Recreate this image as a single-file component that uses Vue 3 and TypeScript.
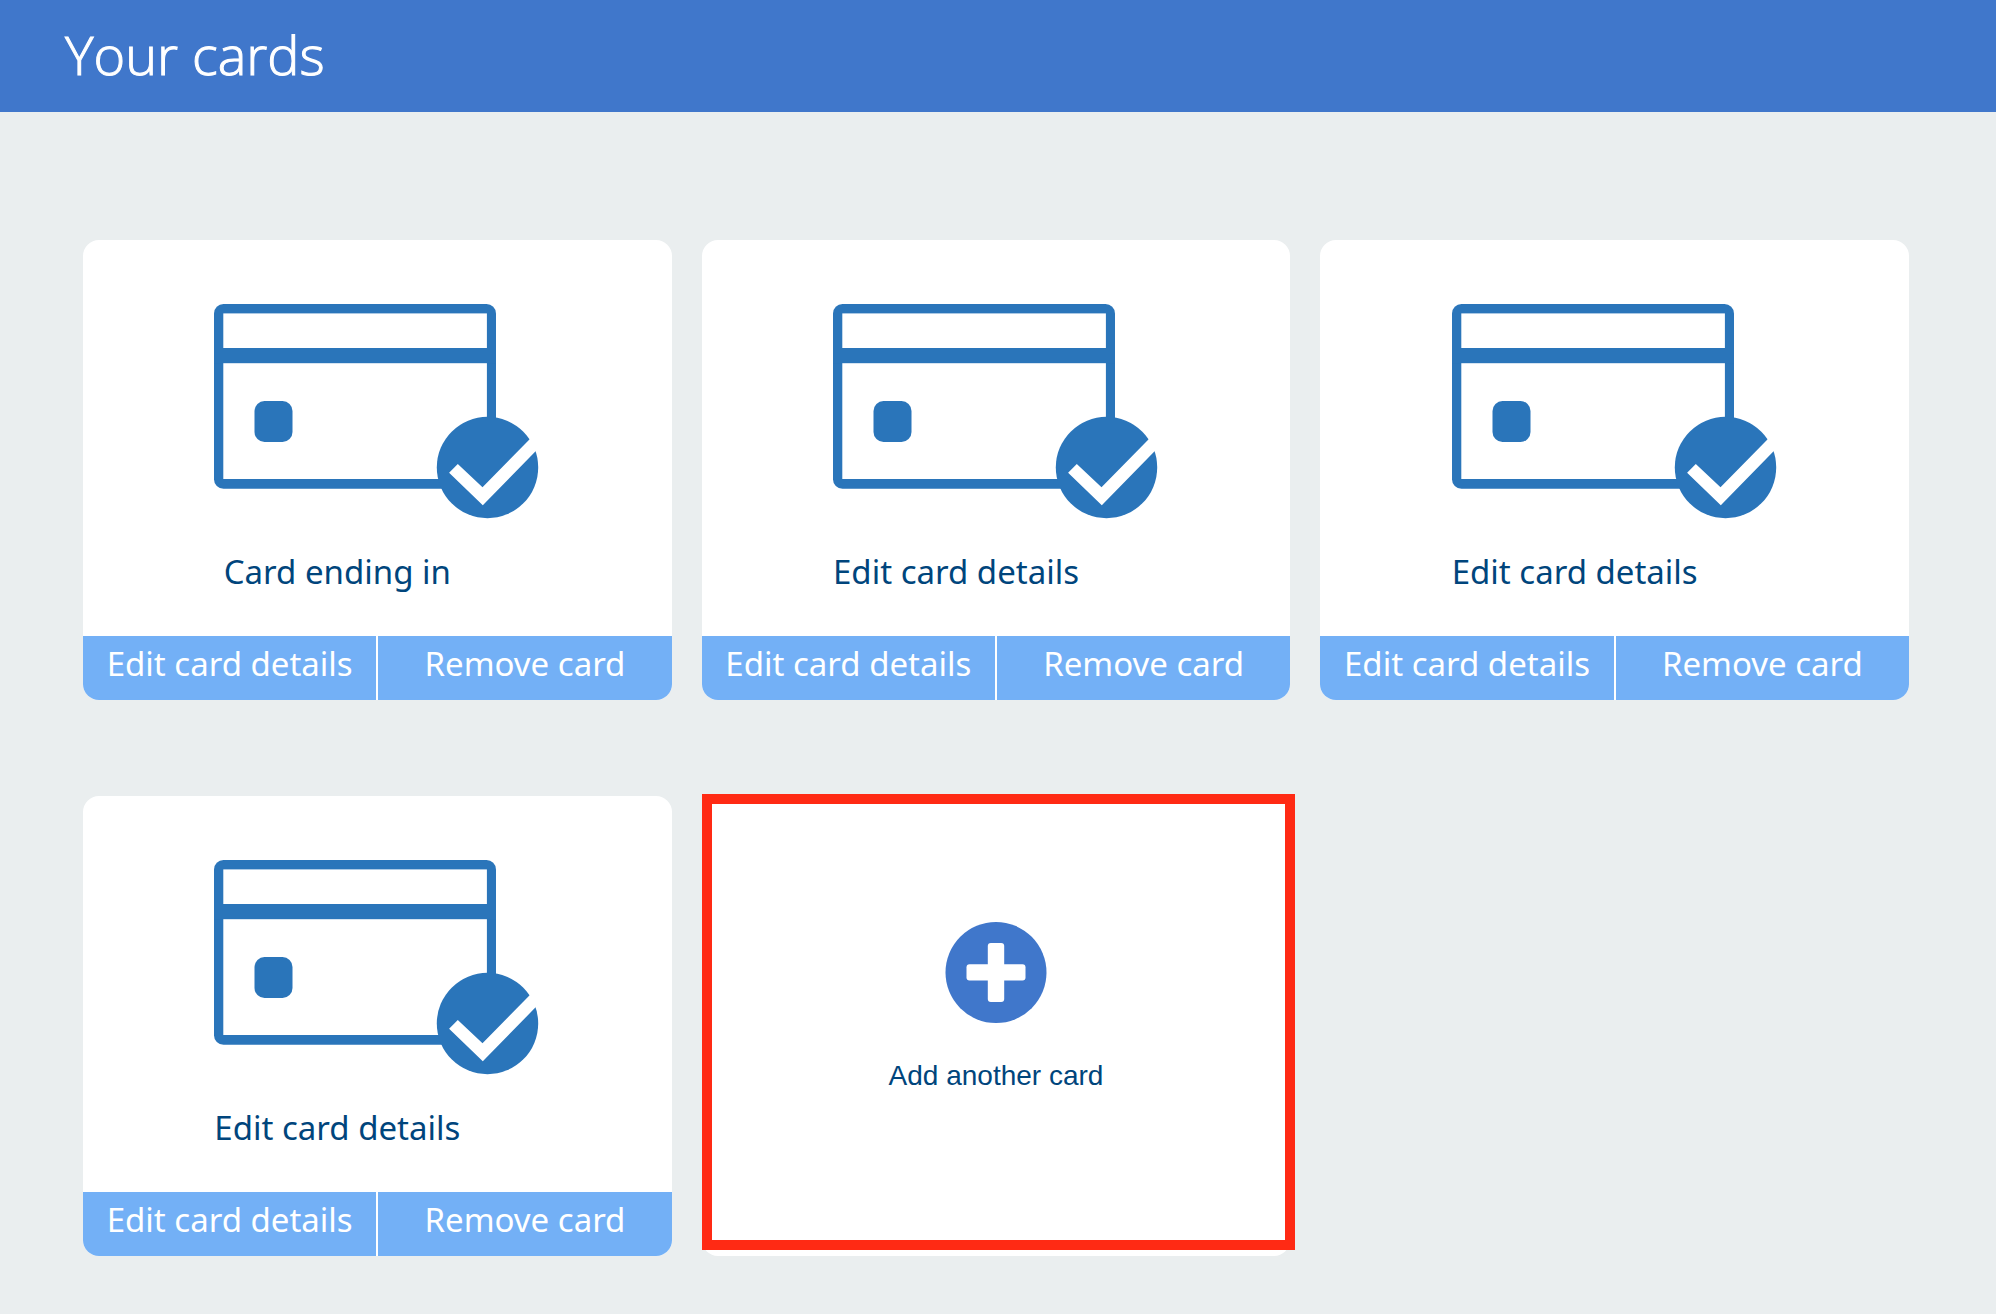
<script setup lang="ts">
interface PaymentCard {
  id: number
  label: string
}

const cards: PaymentCard[] = [
  { id: 1, label: 'Card ending in' },
  { id: 2, label: 'Edit card details' },
  { id: 3, label: 'Edit card details' },
  { id: 4, label: 'Edit card details' },
]
</script>

<template>
  <div class="page">
    <header class="header">
      <h1 class="title">Your cards</h1>
    </header>
    <main class="grid">
      <article v-for="card in cards" :key="card.id" class="card">
        <div class="body">
          <svg class="art" viewBox="0 0 326 216" aria-hidden="true">
            <rect x="0" y="0" width="282" height="184.8" rx="9.5" fill="#2a75ba" />
            <rect x="9.3" y="9.4" width="263.6" height="165.6" fill="#fff" />
            <rect x="0" y="44" width="282" height="15.2" fill="#2a75ba" />
            <rect x="40.5" y="97" width="38" height="41" rx="10" fill="#2a75ba" />
            <circle cx="273.5" cy="163.5" r="50.7" fill="#2a75ba" />
            <path d="M243.8 160 L268.5 183.3 L332.5 118 L338.5 130 L268.8 201.3 L235.1 168.7 Z" fill="#fff" />
          </svg>
          <p class="label">{{ card.label }}</p>
        </div>
        <div class="actions">
          <button type="button" class="action">Edit card details</button>
          <button type="button" class="action">Remove card</button>
        </div>
      </article>
      <button type="button" class="card add">
        <svg class="plus" viewBox="0 0 102 102" aria-hidden="true">
          <circle cx="51" cy="50.5" r="50.5" fill="#4077cb" />
          <rect x="21.5" y="42.2" width="59" height="16.4" rx="3" fill="#fff" />
          <rect x="42.8" y="21" width="16.4" height="59" rx="3" fill="#fff" />
        </svg>
        <span>Add another card</span>
      </button>
    </main>
  </div>
</template>

<style>
body {
  margin: 0;
  background: #eaeeef;
}
</style>

<style scoped>
.page {
  min-height: 100vh;
  background: #eaeeef;
  font-family: "Noto Sans", "Open Sans", sans-serif;
}

.header {
  box-sizing: border-box;
  min-height: 112px;
  padding: 14px 65px 18px;
  background: #4077cb;
}

.title {
  margin: 0;
  color: #fff;
  font-family: "Open Sans", "Noto Sans", sans-serif;
  font-size: 54px;
  font-weight: 300;
  line-height: 80px;
  -webkit-text-stroke: 1px #fff;
}

.grid {
  display: grid;
  grid-template-columns: repeat(3, minmax(0, 1fr));
  gap: 96px 30px;
  padding: 128px 87px 58px 83px;
}

.card {
  display: flex;
  flex-direction: column;
  min-height: 460px;
  border-radius: 16px;
  background: #fff;
}

.body {
  flex: 1;
  display: flex;
  flex-direction: column;
  align-items: center;
  padding-top: 64px;
}

.art {
  width: 326px;
  max-width: 80%;
}

.label {
  margin: 30px 0 0;
  padding-right: 80px;
  color: #00457c;
  font-size: 33px;
  line-height: 44px;
}

.actions {
  display: flex;
  gap: 2px;
  overflow: hidden;
  border-radius: 0 0 16px 16px;
}

.action {
  flex: 1 1 0;
  min-width: 0;
  padding: 6px 0 14px;
  border: 0;
  background: #73b0f6;
  color: #fff;
  font-family: inherit;
  font-size: 33px;
  line-height: 44px;
  cursor: pointer;
}

.add {
  position: relative;
  align-items: center;
  justify-content: flex-start;
  gap: 36px;
  padding: 126px 0 0;
  border: 0;
  color: #00457c;
  font-family: "Liberation Sans", Arial, sans-serif;
  font-size: 28px;
  line-height: 32px;
  cursor: pointer;
}

.add::after {
  content: "";
  position: absolute;
  inset: -2px -5px 6px 0;
  border: 10px solid #ff2a14;
}

.plus {
  width: 102px;
  height: 102px;
}

@media (max-width: 1500px) {
  .grid {
    grid-template-columns: repeat(auto-fill, minmax(540px, 1fr));
  }
}
</style>
